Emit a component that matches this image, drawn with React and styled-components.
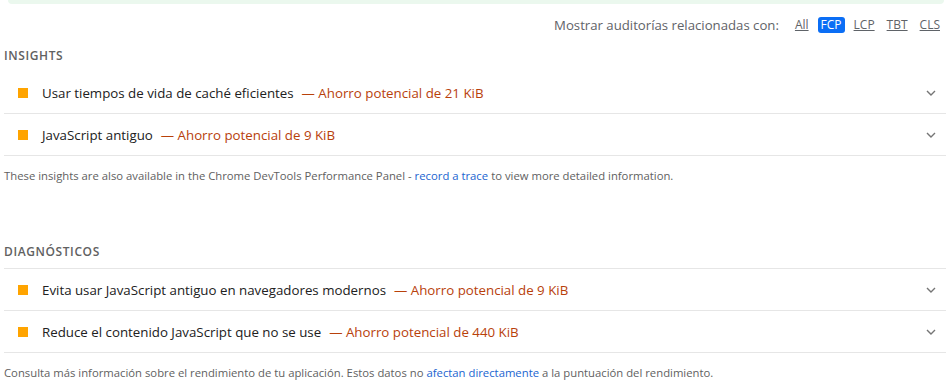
import React from "react";
import styled, { createGlobalStyle } from "styled-components";

const Global = createGlobalStyle`
  html, body { margin: 0; padding: 0; background: #fff; }
  body { font-family: "Open Sans", "Noto Sans", sans-serif; color: #212121; }
`;

const Page = styled.div`
  width: 951px;
  height: 386px;
  overflow: hidden;
  box-sizing: border-box;
  padding: 0 5px 0 4px;
`;

const TopStrip = styled.div`
  height: 4px;
  margin: 0 2px 0 4px;
  background: #ebf8ee;
  border-radius: 0 0 6px 6px;
`;

const FilterBar = styled.div`
  display: flex;
  justify-content: flex-end;
  align-items: center;
  height: 34px;
  margin-top: 4px;
  padding-right: 3px;
  font-size: 13.2px;
  color: #5f6368;
`;

const FilterLabel = styled.span`
  margin-right: 13px;
`;

const Chip = styled.span`
  padding: 0 3px;
  margin-left: ${(p) => (p.$first ? "0" : "6px")};
  border-radius: 3px;
  font-size: 12px;
  text-decoration: ${(p) => (p.$active ? "none" : "underline")};
  color: ${(p) => (p.$active ? "#fff" : "#5f6368")};
  background: ${(p) => (p.$active ? "#0b6ef5" : "transparent")};
  line-height: 16px;
`;

const SectionTitle = styled.div`
  font-size: 12px;
  font-weight: 600;
  letter-spacing: 0.6px;
  color: #616161;
  text-transform: uppercase;
  height: 26px;
  margin-bottom: 4px;
  display: flex;
  align-items: center;
`;

const List = styled.div`
  display: flex;
  flex-direction: column;
`;

const Row = styled.div`
  display: flex;
  align-items: center;
  height: 41px;
  border-bottom: 1px solid #e6e6e6;
  border-top: ${(p) => (p.$first ? "1px solid #e6e6e6" : "none")};
  padding: 0 10px 0 14px;
  font-size: 13.3px;
`;

const Square = styled.span`
  width: 10px;
  height: 10px;
  background: #ffa400;
  flex: none;
  margin-right: 14px;
`;

const Title = styled.span`
  color: #212121;
`;

const Savings = styled.span`
  color: #b8410b;
  margin-left: 8px;
`;

const Chevron = styled.svg`
  margin-left: auto;
  width: 10px;
  height: 6px;
  flex: none;
`;

const Note = styled.div`
  font-size: 11.3px;
  color: #616161;
  height: 38px;
  display: flex;
  align-items: center;
`;

const Link = styled.a`
  color: #1a64d0;
  text-decoration: none;
  margin: 0 3px;
`;

const Spacer = styled.div`
  height: ${(p) => p.$h}px;
`;

function AuditRow({ title, savings, first }) {
  return (
    <Row $first={first}>
      <Square />
      <Title>{title}</Title>
      <Savings>— {savings}</Savings>
      <Chevron viewBox="0 0 10 6">
        <path d="M1 1 L5 5 L9 1" fill="none" stroke="#757575" strokeWidth="1.4" />
      </Chevron>
    </Row>
  );
}

export default function App() {
  return (
    <>
      <Global />
      <Page>
        <TopStrip />
        <FilterBar>
          <FilterLabel>Mostrar auditorías relacionadas con:</FilterLabel>
          <Chip $first>All</Chip>
          <Chip $active>FCP</Chip>
          <Chip>LCP</Chip>
          <Chip>TBT</Chip>
          <Chip>CLS</Chip>
        </FilterBar>
        <SectionTitle>Insights</SectionTitle>
        <List>
          <AuditRow title="Usar tiempos de vida de caché eficientes" savings="Ahorro potencial de 21 KiB" />
          <AuditRow title="JavaScript antiguo" savings="Ahorro potencial de 9 KiB" />
        </List>
        <Note>
          These insights are also available in the Chrome DevTools Performance Panel -
          <Link href="#">record a trace</Link>
          to view more detailed information.
        </Note>
        <Spacer $h={44} />
        <SectionTitle>Diagnósticos</SectionTitle>
        <List>
          <AuditRow first title="Evita usar JavaScript antiguo en navegadores modernos" savings="Ahorro potencial de 9 KiB" />
          <AuditRow title="Reduce el contenido JavaScript que no se use" savings="Ahorro potencial de 440 KiB" />
        </List>
        <Note>
          Consulta más información sobre el rendimiento de tu aplicación. Estos datos no
          <Link href="#">afectan directamente</Link>
          a la puntuación del rendimiento.
        </Note>
      </Page>
    </>
  );
}
